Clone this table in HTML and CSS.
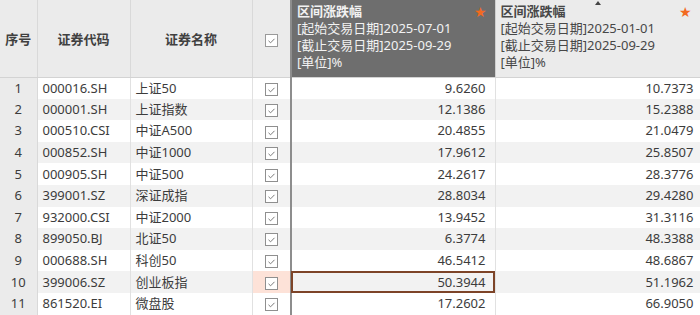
FILE: index.html
```html
<!DOCTYPE html>
<html lang="zh">
<head>
<meta charset="utf-8">
<link rel="stylesheet" href="styles.css">
</head>
<body>
<table class="sheet">
  <colgroup>
    <col class="c-idx"><col class="c-code"><col class="c-name"><col class="c-chk"><col class="c-v1"><col class="c-v2">
  </colgroup>
  <thead>
    <tr>
      <th class="h-plain">序号</th>
      <th class="h-plain">证券代码</th>
      <th class="h-plain">证券名称</th>
      <th class="h-plain h-chk"><span class="box"><svg viewBox="0 0 13 13" width="13" height="13"><polyline points="3.5,6.8 5.6,8.8 9.5,4.8" fill="none" stroke="#7a7a7a" stroke-width="1"/></svg></span></th>
      <th class="h-data h-sel">
        <div class="h-title">区间涨跌幅</div>
        <div>[起始交易日期]2025-07-01</div>
        <div>[截止交易日期]2025-09-29</div>
        <div>[单位]%</div>
        <span class="star">★</span>
      </th>
      <th class="h-data">
        <span class="sort"></span>
        <div class="h-title">区间涨跌幅</div>
        <div>[起始交易日期]2025-01-01</div>
        <div>[截止交易日期]2025-09-29</div>
        <div>[单位]%</div>
        <span class="star">★</span>
      </th>
    </tr>
  </thead>
  <tbody>
    <tr><td class="idx">1</td><td>000016.SH</td><td>上证50</td><td class="chk"><span class="box"><svg viewBox="0 0 13 13" width="13" height="13"><polyline points="3.5,6.8 5.6,8.8 9.5,4.8" fill="none" stroke="#7a7a7a" stroke-width="1"/></svg></span></td><td class="num v1">9.6260</td><td class="num">10.7373</td></tr>
    <tr><td class="idx">2</td><td>000001.SH</td><td>上证指数</td><td class="chk"><span class="box"><svg viewBox="0 0 13 13" width="13" height="13"><polyline points="3.5,6.8 5.6,8.8 9.5,4.8" fill="none" stroke="#7a7a7a" stroke-width="1"/></svg></span></td><td class="num v1">12.1386</td><td class="num">15.2388</td></tr>
    <tr><td class="idx">3</td><td>000510.CSI</td><td>中证A500</td><td class="chk"><span class="box"><svg viewBox="0 0 13 13" width="13" height="13"><polyline points="3.5,6.8 5.6,8.8 9.5,4.8" fill="none" stroke="#7a7a7a" stroke-width="1"/></svg></span></td><td class="num v1">20.4855</td><td class="num">21.0479</td></tr>
    <tr><td class="idx">4</td><td>000852.SH</td><td>中证1000</td><td class="chk"><span class="box"><svg viewBox="0 0 13 13" width="13" height="13"><polyline points="3.5,6.8 5.6,8.8 9.5,4.8" fill="none" stroke="#7a7a7a" stroke-width="1"/></svg></span></td><td class="num v1">17.9612</td><td class="num">25.8507</td></tr>
    <tr><td class="idx">5</td><td>000905.SH</td><td>中证500</td><td class="chk"><span class="box"><svg viewBox="0 0 13 13" width="13" height="13"><polyline points="3.5,6.8 5.6,8.8 9.5,4.8" fill="none" stroke="#7a7a7a" stroke-width="1"/></svg></span></td><td class="num v1">24.2617</td><td class="num">28.3776</td></tr>
    <tr><td class="idx">6</td><td>399001.SZ</td><td>深证成指</td><td class="chk"><span class="box"><svg viewBox="0 0 13 13" width="13" height="13"><polyline points="3.5,6.8 5.6,8.8 9.5,4.8" fill="none" stroke="#7a7a7a" stroke-width="1"/></svg></span></td><td class="num v1">28.8034</td><td class="num">29.4280</td></tr>
    <tr><td class="idx">7</td><td>932000.CSI</td><td>中证2000</td><td class="chk"><span class="box"><svg viewBox="0 0 13 13" width="13" height="13"><polyline points="3.5,6.8 5.6,8.8 9.5,4.8" fill="none" stroke="#7a7a7a" stroke-width="1"/></svg></span></td><td class="num v1">13.9452</td><td class="num">31.3116</td></tr>
    <tr><td class="idx">8</td><td>899050.BJ</td><td>北证50</td><td class="chk"><span class="box"><svg viewBox="0 0 13 13" width="13" height="13"><polyline points="3.5,6.8 5.6,8.8 9.5,4.8" fill="none" stroke="#7a7a7a" stroke-width="1"/></svg></span></td><td class="num v1">6.3774</td><td class="num">48.3388</td></tr>
    <tr><td class="idx">9</td><td>000688.SH</td><td>科创50</td><td class="chk"><span class="box"><svg viewBox="0 0 13 13" width="13" height="13"><polyline points="3.5,6.8 5.6,8.8 9.5,4.8" fill="none" stroke="#7a7a7a" stroke-width="1"/></svg></span></td><td class="num v1">46.5412</td><td class="num">48.6867</td></tr>
    <tr class="hl"><td class="idx">10</td><td>399006.SZ</td><td>创业板指</td><td class="chk"><span class="box"><svg viewBox="0 0 13 13" width="13" height="13"><polyline points="3.5,6.8 5.6,8.8 9.5,4.8" fill="none" stroke="#7a7a7a" stroke-width="1"/></svg></span></td><td class="num v1 cur">50.3944</td><td class="num">51.1962</td></tr>
    <tr><td class="idx">11</td><td>861520.EI</td><td>微盘股</td><td class="chk"><span class="box"><svg viewBox="0 0 13 13" width="13" height="13"><polyline points="3.5,6.8 5.6,8.8 9.5,4.8" fill="none" stroke="#7a7a7a" stroke-width="1"/></svg></span></td><td class="num v1">17.2602</td><td class="num">66.9050</td></tr>
  </tbody>
</table>
</body>
</html>
```
FILE: styles.css
```css
html, body {
  margin: 0;
  padding: 0;
  background: #ffffff;
}
body {
  font-family: "Noto Sans", "Noto Sans CJK SC", sans-serif;
  font-size: 13px;
  color: #3c3c3c;
  overflow: hidden;
}
.sheet {
  border-collapse: collapse;
  table-layout: fixed;
  width: 700px;
}
.c-idx { width: 37px; }
.c-code { width: 93px; }
.c-name { width: 122px; }
.c-chk { width: 39px; }
.c-v1 { width: 204px; }
.c-v2 { width: 205px; }

thead tr { height: 77px; }
th {
  background: #ebebeb;
  border-right: 1px solid #d9d9d9;
  border-bottom: 1px solid #d3d3d3;
  padding: 0;
  vertical-align: middle;
  position: relative;
}
.h-plain {
  font-family: "Noto Sans CJK SC", sans-serif;
  font-weight: 700;
  font-size: 13px;
  color: #404040;
  text-align: center;
}
.h-chk { border-right: 2px solid #8d8d8d; }
.h-data {
  text-align: left;
  font-weight: 400;
  font-size: 13px;
  line-height: 17.6px;
  color: #474747;
  padding: 3px 0 0 5px;
  vertical-align: top;
}
.h-data div { height: 17px; }
.h-sel {
  background: #6e6e6e;
  color: #f2f2f2;
  border-right: 1px solid #cfcfcf;
}
.h-title {
  font-family: "Noto Sans", "Noto Sans CJK SC", sans-serif;
  font-weight: 700;
}
.star {
  position: absolute;
  top: 2px;
  right: 8px;
  color: #f26a21;
  font-size: 14px;
  line-height: 20px;
  font-family: "DejaVu Sans", sans-serif;
}
.sort {
  position: absolute;
  top: 1px;
  left: 99px;
  width: 0;
  height: 0;
  border-left: 3px solid transparent;
  border-right: 3px solid transparent;
  border-bottom: 4px solid #444;
}

tbody tr { height: 21.6px; }
tbody tr:nth-child(even) td { background: #f2f2f2; }
td {
  padding: 0 5px;
  border-right: 1px solid #e1e1e1;
  white-space: nowrap;
  line-height: 17px;
  vertical-align: middle;
}
td.idx,
tbody tr:nth-child(even) td.idx {
  background: #ebebeb;
  text-align: center;
  padding: 0;
  border-right: 1px solid #d9d9d9;
}
td.chk {
  text-align: center;
  padding: 0;
  border-right: 2px solid #8d8d8d;
}
.box {
  display: inline-block;
  width: 13px;
  height: 13px;
  box-sizing: border-box;
  border: 1px solid #8f8f8f;
  background: #fff;
  vertical-align: middle;
  position: relative;
}
.box svg {
  position: absolute;
  left: -1px;
  top: -1px;
}
.h-chk .box { border-color: #9a9a9a; }
td.num {
  text-align: right;
  padding-right: 6px;
}
td.v1 { padding-right: 9px; }
tr.hl td { background: #fde2d8; }
tr.hl td.idx { background: #b2b2b2; }
tr.hl td.chk { background: #fde2d8; }
td.cur {
  outline: 2px solid #7d4428;
  outline-offset: -2px;
}
```
